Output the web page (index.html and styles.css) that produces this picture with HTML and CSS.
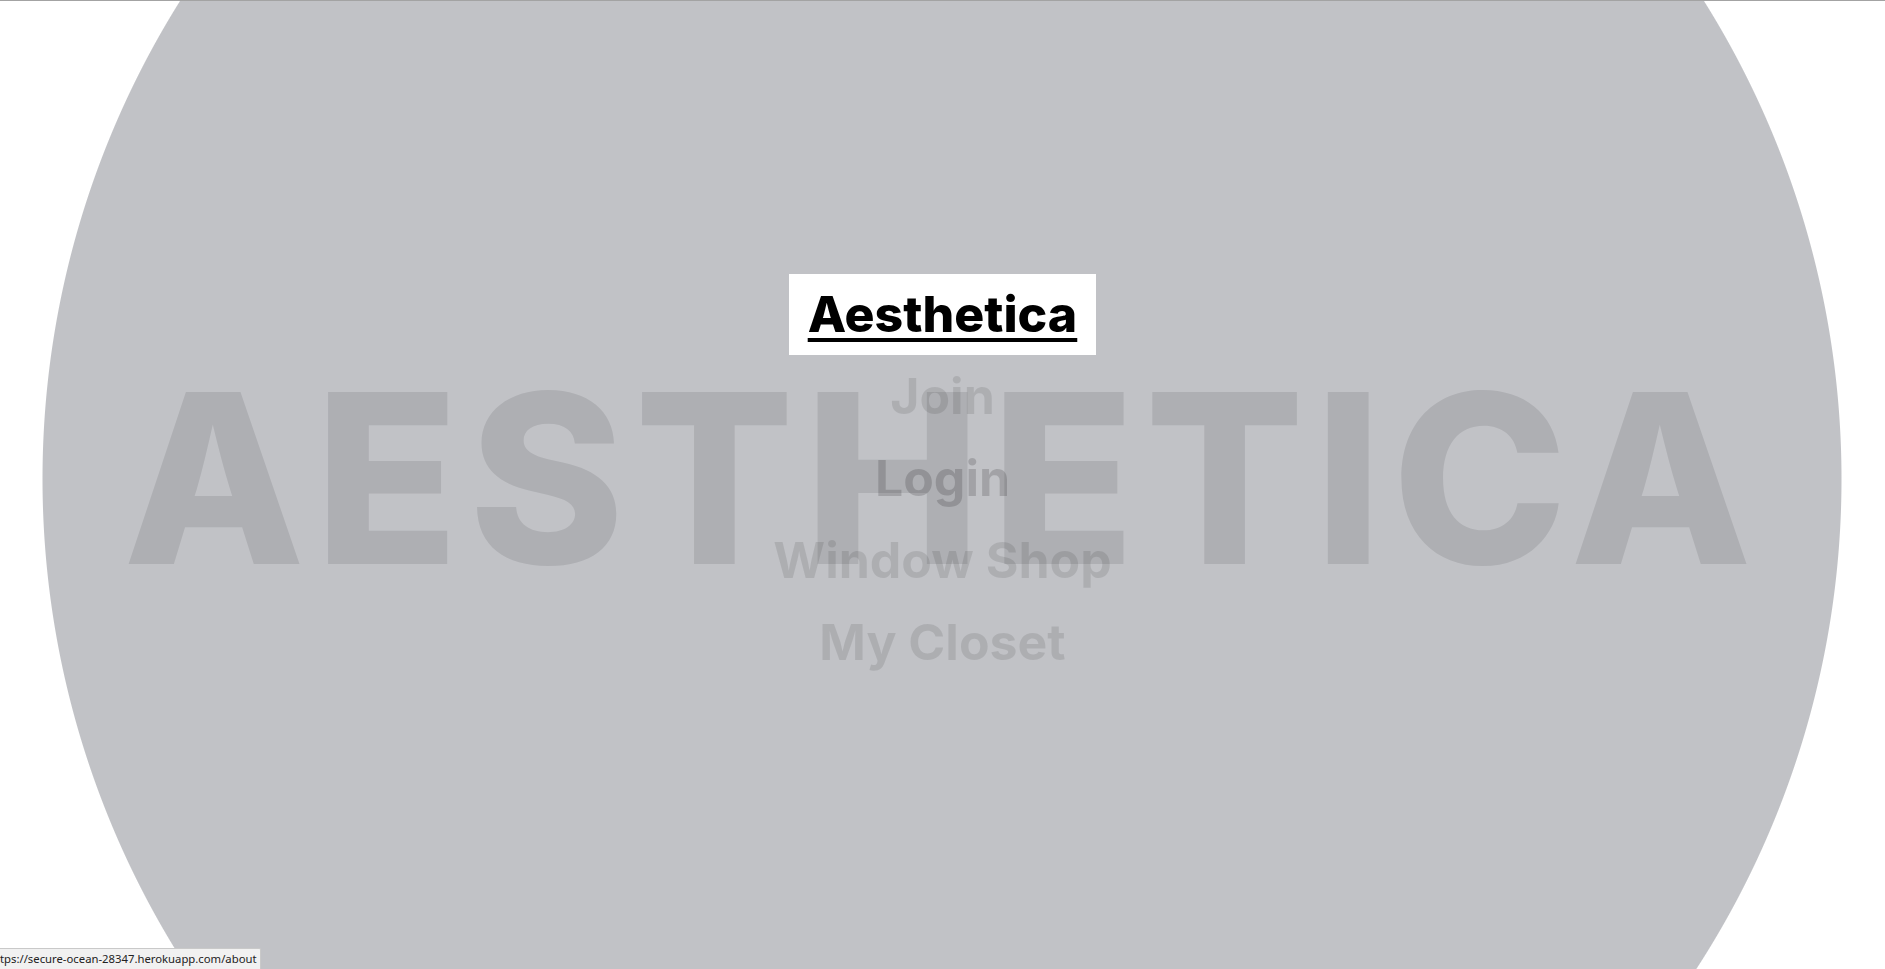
FILE: index.html
```html
<!DOCTYPE html>
<html lang="en">
<head>
<meta charset="utf-8">
<title>Aesthetica</title>
<link rel="stylesheet" href="styles.css">
</head>
<body>
<div class="stage">
  <div class="bigword">AESTHETICA</div>
  <nav class="menu">
    <a class="title" href="#">Aesthetica</a>
    <a class="link" href="#">Join</a>
    <a class="link link-hover" href="#">Login</a>
    <a class="link" href="#">Window Shop</a>
    <a class="link" href="#">My Closet</a>
  </nav>
</div>
<div class="status">tps://secure-ocean-28347.herokuapp.com/about</div>
</body>
</html>
```
FILE: styles.css
```css
html, body {
  margin: 0;
  padding: 0;
}
body {
  height: 969px;
  overflow: hidden;
  box-sizing: border-box;
  border-top: 1px solid #a3a3a3;
  background: radial-gradient(circle 900px at 942px 479px, #c1c2c6 899px, #ffffff 900px);
  font-family: Inter, "Noto Sans", sans-serif;
}
.stage {
  height: 968px;
  display: grid;
  place-items: center;
  padding-bottom: 14px;
  box-sizing: border-box;
}
.bigword {
  grid-area: 1 / 1;
  font-size: 236px;
  font-weight: 800;
  color: #aeafb3;
  letter-spacing: 10px;
  line-height: 1;
  white-space: nowrap;
}
.menu {
  grid-area: 1 / 1;
  display: flex;
  flex-direction: column;
  align-items: center;
}
.title {
  background: #ffffff;
  color: #000000;
  font-size: 50px;
  font-weight: 800;
  line-height: 81px;
  padding: 0 19px;
  text-decoration: underline;
  text-decoration-thickness: 4px;
  text-underline-offset: 6px;
}
.link {
  color: rgba(0, 0, 0, 0.1);
  font-size: 50px;
  font-weight: 700;
  line-height: 82px;
  text-decoration: none;
}
.link-hover {
  color: rgba(0, 0, 0, 0.16);
}
.status {
  position: fixed;
  left: 0;
  bottom: 0;
  height: 20px;
  line-height: 20px;
  padding: 0 3px 0 0;
  background: #f1f1f1;
  border: 1px solid #c9c9c9;
  border-left: none;
  border-bottom: none;
  border-top-right-radius: 2px;
  font-family: "Noto Sans", "DejaVu Sans", sans-serif;
  font-size: 11.3px;
  color: #222;
}
```
